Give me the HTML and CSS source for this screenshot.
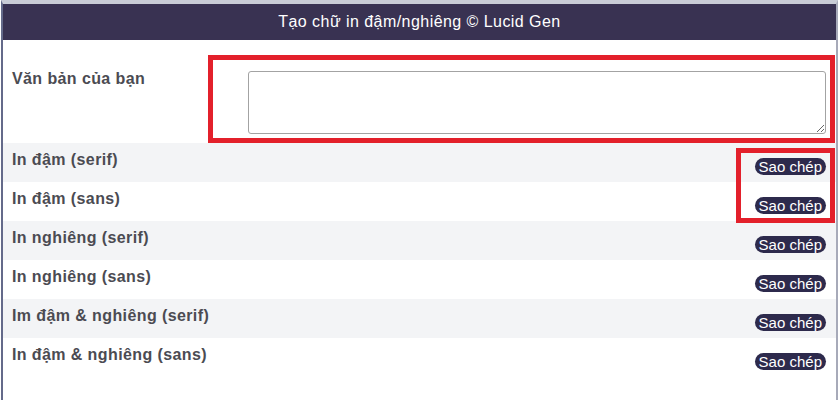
FILE: index.html
```html
<!DOCTYPE html>
<html lang="vi">
<head>
    <meta charset="UTF-8">
    <meta name="viewport" content="width=device-width, initial-scale=1.0">
    <title>Tạo chữ in đậm/nghiêng</title>
    <link rel="stylesheet" href="styles.css">
</head>
<body>
    <div class="frame">
        <header class="title-bar">Tạo chữ in đậm/nghiêng © Lucid Gen</header>

        <section class="input-row">
            <label class="field-label" for="userText">Văn bản của bạn</label>
            <div class="mark mark-input">
                <textarea id="userText"></textarea>
            </div>
        </section>

        <div class="style-list">
            <div class="style-row">
                <span class="style-name">In đậm (serif)</span>
                <button class="copy-btn">Sao chép</button>
            </div>
            <div class="style-row">
                <span class="style-name">In đậm (sans)</span>
                <button class="copy-btn">Sao chép</button>
            </div>
            <div class="style-row">
                <span class="style-name">In nghiêng (serif)</span>
                <button class="copy-btn">Sao chép</button>
            </div>
            <div class="style-row">
                <span class="style-name">In nghiêng (sans)</span>
                <button class="copy-btn">Sao chép</button>
            </div>
            <div class="style-row">
                <span class="style-name">Im đậm &amp; nghiêng (serif)</span>
                <button class="copy-btn">Sao chép</button>
            </div>
            <div class="style-row">
                <span class="style-name">In đậm &amp; nghiêng (sans)</span>
                <button class="copy-btn">Sao chép</button>
            </div>

            <div class="mark mark-buttons"></div>
        </div>
    </div>
</body>
</html>
```

FILE: styles.css
```css
html, body {
    margin: 0;
    padding: 0;
    overflow: hidden;
    background-color: #ffffff;
}

body {
    font-family: "Liberation Sans", Arial, sans-serif;
}

.frame {
    margin: 0 2px 0 1px;
    height: 396px;
    border-left: 2px solid #646a8a;
    border-right: 2px solid #a7aab9;
    border-top: 4px solid #c9ccd6;
}

.title-bar {
    height: 36px;
    line-height: 36px;
    background-color: #393252;
    color: #ffffff;
    text-align: center;
    font-size: 16px;
    letter-spacing: 0.45px;
}

.input-row {
    display: flex;
    align-items: flex-start;
    height: 103px;
    padding: 15px 1px 0 9px;
    box-sizing: border-box;
}

.field-label {
    padding-top: 14px;
    font-size: 16px;
    line-height: 19px;
    font-weight: bold;
    letter-spacing: 0.4px;
    color: #4b4b52;
}

.mark {
    border: 5px solid #e3202b;
    box-sizing: border-box;
}

.mark-input {
    margin-left: auto;
    width: 627px;
    height: 88px;
    padding: 11px 4px 0 35px;
}

.mark-input textarea {
    display: block;
    width: 100%;
    height: 63px;
    box-sizing: border-box;
    border: 1px solid #a3a3a3;
    border-radius: 3px;
    background: #ffffff;
}

.style-list {
    position: relative;
}

.style-row {
    display: flex;
    justify-content: space-between;
    align-items: flex-start;
    height: 39px;
    padding: 7px 10px 0 9px;
    box-sizing: border-box;
}

.style-row:nth-child(odd) {
    background-color: #f3f4f6;
}

.style-name {
    font-size: 16px;
    line-height: 19px;
    font-weight: bold;
    letter-spacing: 0.4px;
    color: #4b4b52;
}

.copy-btn {
    margin-top: 8px;
    height: 17px;
    padding: 0 4px;
    border: none;
    border-radius: 9px;
    background-color: #2d2a4c;
    color: #ffffff;
    font-family: "Liberation Sans", Arial, sans-serif;
    font-size: 15px;
    line-height: 17px;
    cursor: pointer;
}

.mark-buttons {
    position: absolute;
    top: 5px;
    left: 733px;
    width: 99px;
    height: 75px;
}
```
